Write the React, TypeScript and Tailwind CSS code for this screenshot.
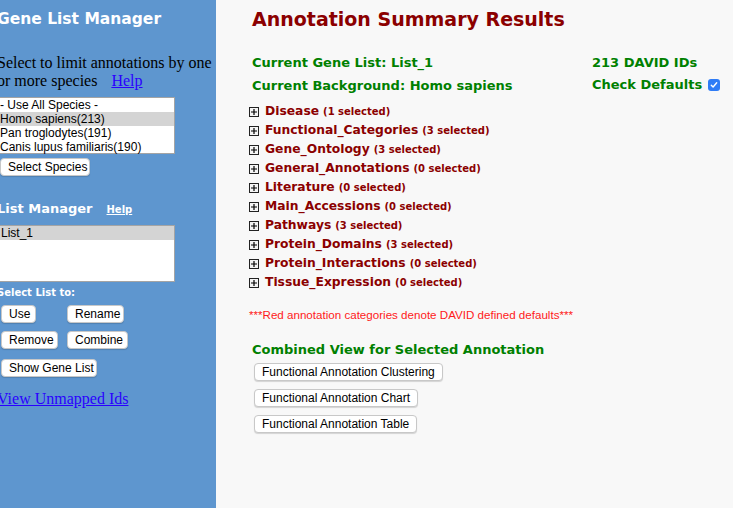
import React from "react";

const verdana = { fontFamily: '"DejaVu Sans", Verdana, sans-serif' };
const serif = { fontFamily: '"Liberation Serif", "Times New Roman", serif' };
const sans = { fontFamily: '"Liberation Sans", Arial, Helvetica, sans-serif' };

function Btn({ children, className = "" }: { children: React.ReactNode; className?: string }) {
  return (
    <button
      style={sans}
      className={`h-[18px] whitespace-nowrap rounded-[4px] border border-[#c8c8c8] bg-white px-[7px] text-[12px] leading-[16px] text-black shadow-[0_1px_1px_rgba(0,0,0,0.15)] ${className}`}
    >
      {children}
    </button>
  );
}

function PlusBox() {
  return (
    <svg width="10" height="10" viewBox="0 0 10 10" className="shrink-0 self-center">
      <rect x="0.5" y="0.5" width="9" height="9" fill="#f4f4f4" stroke="#222" strokeWidth="1" />
      <path d="M2 5H8M5 2V8" stroke="#000" strokeWidth="1.2" />
    </svg>
  );
}

const cats: [string, string][] = [
  ["Disease", "1"],
  ["Functional_Categories", "3"],
  ["Gene_Ontology", "3"],
  ["General_Annotations", "0"],
  ["Literature", "0"],
  ["Main_Accessions", "0"],
  ["Pathways", "3"],
  ["Protein_Domains", "3"],
  ["Protein_Interactions", "0"],
  ["Tissue_Expression", "0"],
];

export default function App() {
  return (
    <div className="flex h-[508px] w-[733px] overflow-hidden bg-[#f8f8f8]">
      {/* Left panel */}
      <div className="w-[216px] shrink-0 overflow-hidden bg-[#5e96cf]">
        <div className="-ml-[3px] flex flex-col">
          <div style={verdana} className="mt-[9px] text-[15.5px] font-bold leading-[20px] text-white">
            Gene List Manager
          </div>
          <div style={serif} className="mt-[25px] text-[16px] leading-[18px] text-black">
            Select to limit annotations by one
            <br />
            or more species{" "}
            <span className="ml-[10px] text-[#2a00ff] underline">Help</span>
          </div>
          <div
            style={sans}
            className="mt-[7px] h-[57px] w-[178px] border border-[#a4a4a4] bg-white text-[12px] leading-[14px] text-black"
          >
            <div className="pl-[2px]">- Use All Species -</div>
            <div className="bg-[#d4d4d4] pl-[2px]">Homo sapiens(213)</div>
            <div className="pl-[2px]">Pan troglodytes(191)</div>
            <div className="pl-[2px]">Canis lupus familiaris(190)</div>
          </div>
          <div className="mt-[4px] ml-[3px] flex">
            <Btn className="w-[90px] px-0">Select Species</Btn>
          </div>
          <div className="mt-[24px] flex items-baseline">
            <span style={verdana} className="text-[13px] font-bold leading-[18px] text-white">
              List Manager
            </span>
            <span style={verdana} className="ml-[14px] text-[10px] font-bold text-white underline">
              Help
            </span>
          </div>
          <div
            style={sans}
            className="mt-[7px] h-[57px] w-[178px] border border-[#a4a4a4] bg-white text-[12px] leading-[14px] text-black"
          >
            <div className="bg-[#d4d4d4] pl-[3px]">List_1</div>
          </div>
          <div style={verdana} className="mt-[5px] text-[10px] font-bold leading-[12px] text-white">
            Select List to:
          </div>
          <div className="mt-[6px] ml-[4px] flex">
            <Btn className="w-[35px] px-0">Use</Btn>
            <Btn className="ml-[31px] w-[57px] px-0">Rename</Btn>
          </div>
          <div className="mt-[8px] ml-[4px] flex">
            <Btn className="w-[57px] px-0">Remove</Btn>
            <Btn className="ml-[9px] w-[61px] px-0">Combine</Btn>
          </div>
          <div className="mt-[10px] ml-[4px] flex">
            <Btn className="w-[96px] px-0">Show Gene List</Btn>
          </div>
          <div style={serif} className="mt-[13px] text-[16px] leading-[18px] text-[#2a00ff] underline">
            View Unmapped Ids
          </div>
        </div>
      </div>

      {/* Right panel */}
      <div className="flex-1 pl-[33px]" style={verdana}>
        <div className="ml-[3px] mt-[7px] text-[19px] font-bold leading-[24px] text-[#8b0000]">
          Annotation Summary Results
        </div>
        <div className="mt-[20px] flex">
          <div className="ml-[3px] w-[340px] text-[13px] font-bold leading-[23px] text-[#008000]">
            <div>Current Gene List: List_1</div>
            <div>Current Background: Homo sapiens</div>
          </div>
          <div className="text-[13px] font-bold leading-[23px] text-[#008000]">
            <div>213 DAVID IDs</div>
            <div className="-mt-[1px] flex items-center">
              Check Defaults
              <span className="ml-[6px] inline-flex h-[12px] w-[12px] items-center justify-center rounded-[3px] bg-[#2f7cf6]">
                <svg width="8" height="8" viewBox="0 0 8 8">
                  <path d="M1.3 4.2L3.1 6L6.7 1.8" fill="none" stroke="#fff" strokeWidth="1.4" strokeLinecap="round" strokeLinejoin="round" />
                </svg>
              </span>
            </div>
          </div>
        </div>
        <div className="mt-[5px] flex flex-col">
          {cats.map(([n, c]) => (
            <div key={n} className="flex h-[19px] items-baseline">
              <PlusBox />
              <span className="ml-[6px] text-[12.3px] font-bold leading-[19px] text-[#8b0000]">{n}</span>
              <span className="ml-[4px] text-[10px] font-bold leading-[19px] text-[#8b0000]">({c} selected)</span>
            </div>
          ))}
        </div>
        <div style={sans} className="mt-[16px] text-[11.6px] leading-[13px] text-[#ff1a1a]">
          ***Red annotation categories denote DAVID defined defaults***
        </div>
        <div className="ml-[3px] mt-[20px] text-[13px] font-bold leading-[18px] text-[#008000]">
          Combined View for Selected Annotation
        </div>
        <div className="ml-[5px] mt-[4px] flex flex-col items-start gap-[8px]">
          <Btn>Functional Annotation Clustering</Btn>
          <Btn>Functional Annotation Chart</Btn>
          <Btn>Functional Annotation Table</Btn>
        </div>
      </div>
    </div>
  );
}
